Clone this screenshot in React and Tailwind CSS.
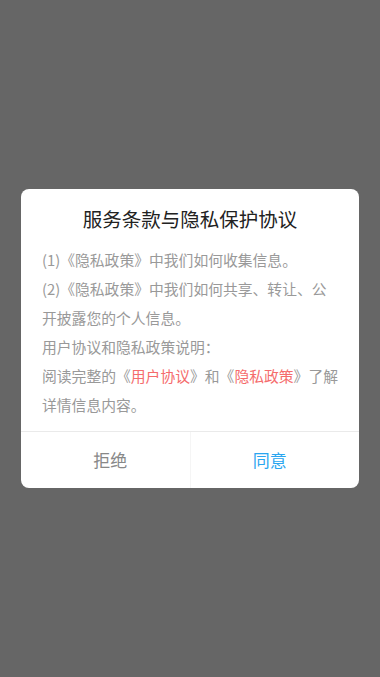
import React from "react";

const FONT = { fontFamily: '"Noto Sans CJK SC", "Liberation Sans", sans-serif' };

function PrivacyDialog() {
  return (
    <div className="w-[338px] rounded-lg bg-white overflow-hidden">
      <div className="pt-[17px] pb-[13px] text-center text-[19.5px] leading-[26px] text-[#222]">
        服务条款与隐私保护协议
      </div>
      <div className="pl-[21px] pr-[20px] pb-[12px] text-[14.8px] leading-[29px] text-[#999]">
        <p>(1)《隐私政策》中我们如何收集信息。</p>
        <p>(2)《隐私政策》中我们如何共享、转让、公开披露您的个人信息。</p>
        <p>用户协议和隐私政策说明：</p>
        <p>
          阅读完整的《<span className="text-[#f56c6c]">用户协议</span>》和《<span className="text-[#f56c6c]">隐私政策</span>》了解详情信息内容。
        </p>
      </div>
      <div className="flex h-[57px] px-[10px] border-t border-[#eaeaea] text-[17px]">
        <button type="button" className="flex-1 text-[#888] border-r border-[#f5f5f5]">
          拒绝
        </button>
        <button type="button" className="flex-1 text-[#2aa6f0]">
          同意
        </button>
      </div>
    </div>
  );
}

export default function App() {
  return (
    <div className="flex min-h-[677px] items-center justify-center bg-[#666666]" style={FONT}>
      <PrivacyDialog />
    </div>
  );
}
